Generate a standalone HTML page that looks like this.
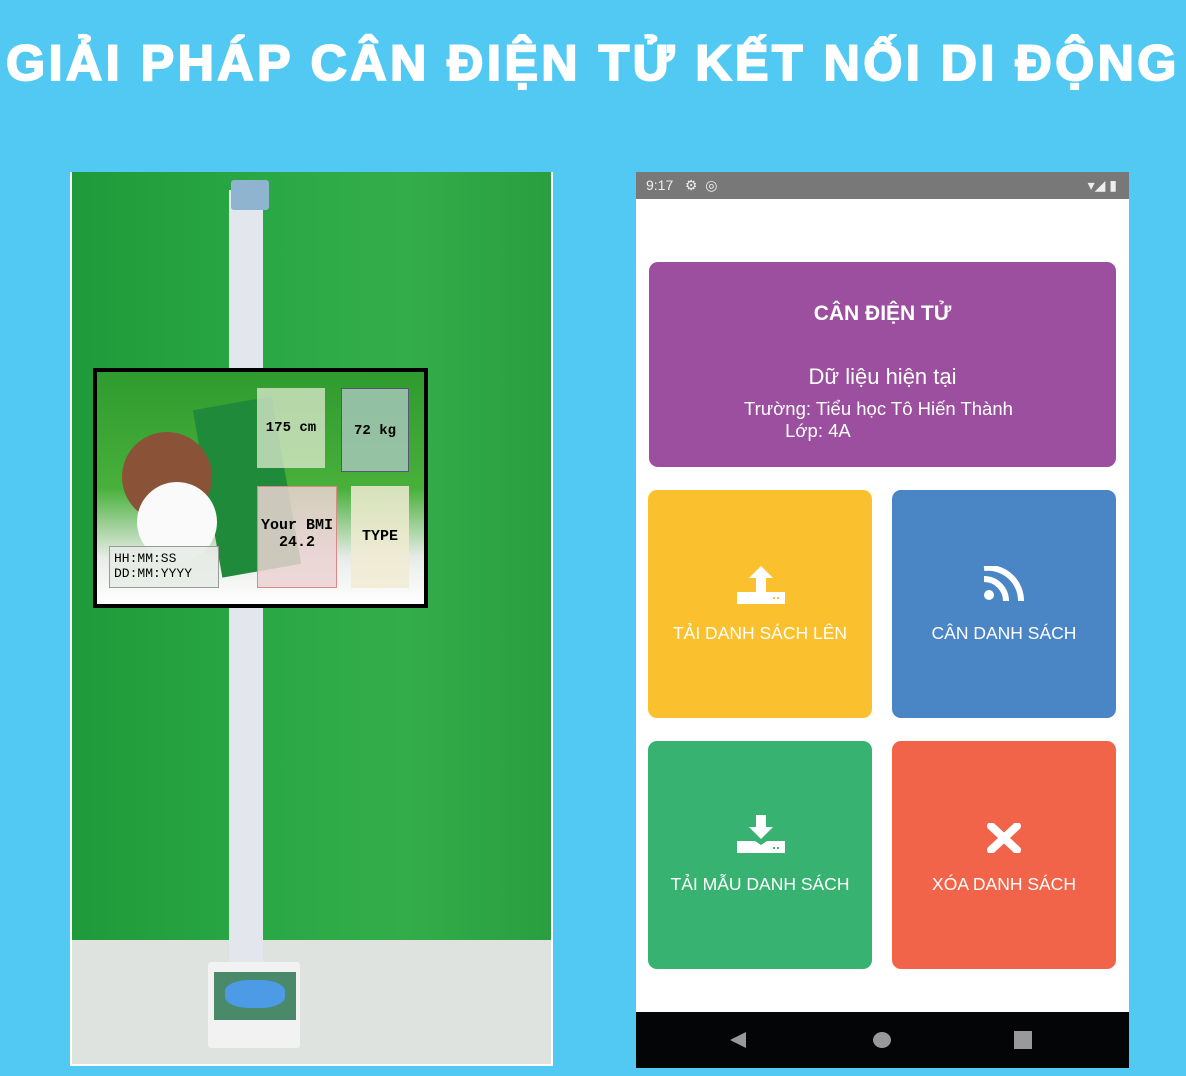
<!DOCTYPE html>
<html><head><meta charset="utf-8"><style>
*{margin:0;padding:0;box-sizing:border-box}
body{width:1186px;height:1076px;background:#52c9f2;position:relative;overflow:hidden;font-family:"Liberation Sans",sans-serif}
.abs{position:absolute}
h1{position:absolute;left:0;top:34px;width:1186px;text-align:center;color:#fff;font:900 50px "Liberation Sans",sans-serif;letter-spacing:3.6px;-webkit-text-stroke:2px #fff;white-space:nowrap}
.tile{position:absolute;border-radius:9px;color:#fff;text-align:center;font-size:17.5px}
.tile .lbl{position:absolute;left:0;right:0;top:133px}
</style></head><body>
<h1>GIẢI PHÁP CÂN ĐIỆN TỬ KẾT NỐI DI ĐỘNG</h1>

<div class="abs" style="left:70px;top:172px;width:483px;height:894px;background:#eef0ee;border:2px solid #fff"></div>
<div class="abs" style="left:72px;top:172px;width:479px;height:768px;background:linear-gradient(90deg,#1f9a3a,#2aa845 40%,#33ad4a 70%,#2a9e40)"></div>
<div class="abs" style="left:72px;top:940px;width:479px;height:124px;background:#dfe3df"></div>
<div class="abs" style="left:229px;top:190px;width:34px;height:790px;background:#e4e6ee"></div>
<div class="abs" style="left:231px;top:180px;width:38px;height:30px;background:#8fb4d0;border-radius:3px"></div>
<div class="abs" style="left:208px;top:962px;width:92px;height:86px;background:#f2f2f2;border-radius:3px"></div>
<div class="abs" style="left:214px;top:972px;width:82px;height:48px;background:#4a8a6a"></div>
<div class="abs" style="left:225px;top:980px;width:60px;height:28px;background:#4d9be6;border-radius:40%"></div>
<div class="abs" style="left:93px;top:368px;width:335px;height:240px;background:#000;padding:4px">
 <div style="position:relative;width:100%;height:100%;background:linear-gradient(180deg,#2f9a2f,#48b03a 50%,#e8ece8 80%,#fff);overflow:hidden;font-family:'Liberation Mono',monospace;font-weight:bold">
  <div class="abs" style="left:110px;top:30px;width:80px;height:170px;background:#1f8a3a;transform:rotate(-10deg)"></div>
  <div class="abs" style="left:25px;top:60px;width:90px;height:90px;background:#8a5236;border-radius:50%"></div>
  <div class="abs" style="left:40px;top:110px;width:80px;height:80px;background:#fafafa;border-radius:50%"></div>
  <div class="abs" style="left:160px;top:16px;width:68px;height:80px;background:rgba(225,235,210,.75);font-size:14px;line-height:80px;text-align:center">175 cm</div>
  <div class="abs" style="left:244px;top:16px;width:68px;height:84px;background:rgba(170,200,190,.8);border:1px solid #557;font-size:14px;line-height:84px;text-align:center">72 kg</div>
  <div class="abs" style="left:160px;top:114px;width:80px;height:102px;background:rgba(235,210,210,.85);border:1px solid #d88;font-size:15px;text-align:center;padding-top:30px">Your BMI<br>24.2</div>
  <div class="abs" style="left:254px;top:114px;width:58px;height:102px;background:rgba(240,235,210,.85);font-size:15px;line-height:102px;text-align:center">TYPE</div>
  <div class="abs" style="left:12px;top:174px;width:110px;height:42px;background:rgba(230,235,230,.8);border:1px solid #999;font-size:13px;font-weight:normal;padding:4px">HH:MM:SS<br>DD:MM:YYYY</div>
 </div>
</div>

<div class="abs" style="left:636px;top:172px;width:493px;height:896px;background:#fff"></div>
<div class="abs" style="left:636px;top:172px;width:493px;height:27px;background:#787878;color:#eee;font-size:14px;line-height:27px;padding-left:10px">9:17 &nbsp;&nbsp;⚙ &nbsp;◎
 <span style="position:absolute;right:12px;top:0">▾◢ ▮</span></div>
<div class="tile" style="left:649px;top:262px;width:467px;height:205px;background:#9b4f9e">
 <div style="position:absolute;left:0;right:0;top:40px;font-size:21px;font-weight:bold">CÂN ĐIỆN TỬ</div>
 <div style="position:absolute;left:0;right:0;top:102px;font-size:22px">Dữ liệu hiện tại</div>
 <div style="position:absolute;left:95px;top:136px;font-size:18.5px;text-align:left;line-height:22px">Trường: Tiểu học Tô Hiến Thành<br>&nbsp;&nbsp;&nbsp;&nbsp;&nbsp;&nbsp;&nbsp;&nbsp;Lớp: 4A</div>
</div>
<div class="tile" style="left:648px;top:490px;width:224px;height:228px;background:#fbc02d">
 <svg class="abs" style="left:89px;top:74px" width="48" height="42" viewBox="0 0 48 42"><path d="M24 2 L36 14 L29 14 L29 28 L19 28 L19 14 L12 14 Z" fill="#fff"/><rect x="0" y="28" width="48" height="12" fill="#fff"/><rect x="36" y="33" width="2" height="2" fill="#fbc02d"/><rect x="40" y="33" width="2" height="2" fill="#fbc02d"/></svg>
 <div class="lbl">TẢI DANH SÁCH LÊN</div></div>
<div class="tile" style="left:892px;top:490px;width:224px;height:228px;background:#4a86c5">
 <svg class="abs" style="left:91px;top:76px" width="42" height="36" viewBox="0 0 42 36"><circle cx="6" cy="29" r="5" fill="#fff"/><path d="M1 13 A22 22 0 0 1 23 35" stroke="#fff" stroke-width="6" fill="none"/><path d="M1 2 A33 33 0 0 1 38 35" stroke="#fff" stroke-width="6" fill="none"/></svg>
 <div class="lbl">CÂN DANH SÁCH</div></div>
<div class="tile" style="left:648px;top:741px;width:224px;height:228px;background:#37b270">
 <svg class="abs" style="left:89px;top:72px" width="48" height="42" viewBox="0 0 48 42"><path d="M19 2 L29 2 L29 14 L36 14 L24 26 L12 14 L19 14 Z" fill="#fff"/><path d="M0 28 L18 28 L24 32 L30 28 L48 28 L48 40 L0 40 Z" fill="#fff"/><rect x="36" y="34" width="2" height="2" fill="#37b270"/><rect x="40" y="34" width="2" height="2" fill="#37b270"/></svg>
 <div class="lbl">TẢI MẪU DANH SÁCH</div></div>
<div class="tile" style="left:892px;top:741px;width:224px;height:228px;background:#f2644a">
 <svg class="abs" style="left:95px;top:82px" width="34" height="30" viewBox="0 0 34 30"><path d="M4 3 L30 27 M30 3 L4 27" stroke="#fff" stroke-width="8" stroke-linecap="round"/></svg>
 <div class="lbl">XÓA DANH SÁCH</div></div>
<div class="abs" style="left:636px;top:1012px;width:493px;height:56px;background:#040506">
 <svg class="abs" style="left:92px;top:18px" width="20" height="20"><path d="M18 2 L2 10 L18 18 Z" fill="#999"/></svg>
 <div class="abs" style="left:237px;top:20px;width:18px;height:16px;border-radius:50%;background:#999"></div>
 <div class="abs" style="left:378px;top:19px;width:18px;height:18px;background:#999"></div>
</div>
</body></html>
